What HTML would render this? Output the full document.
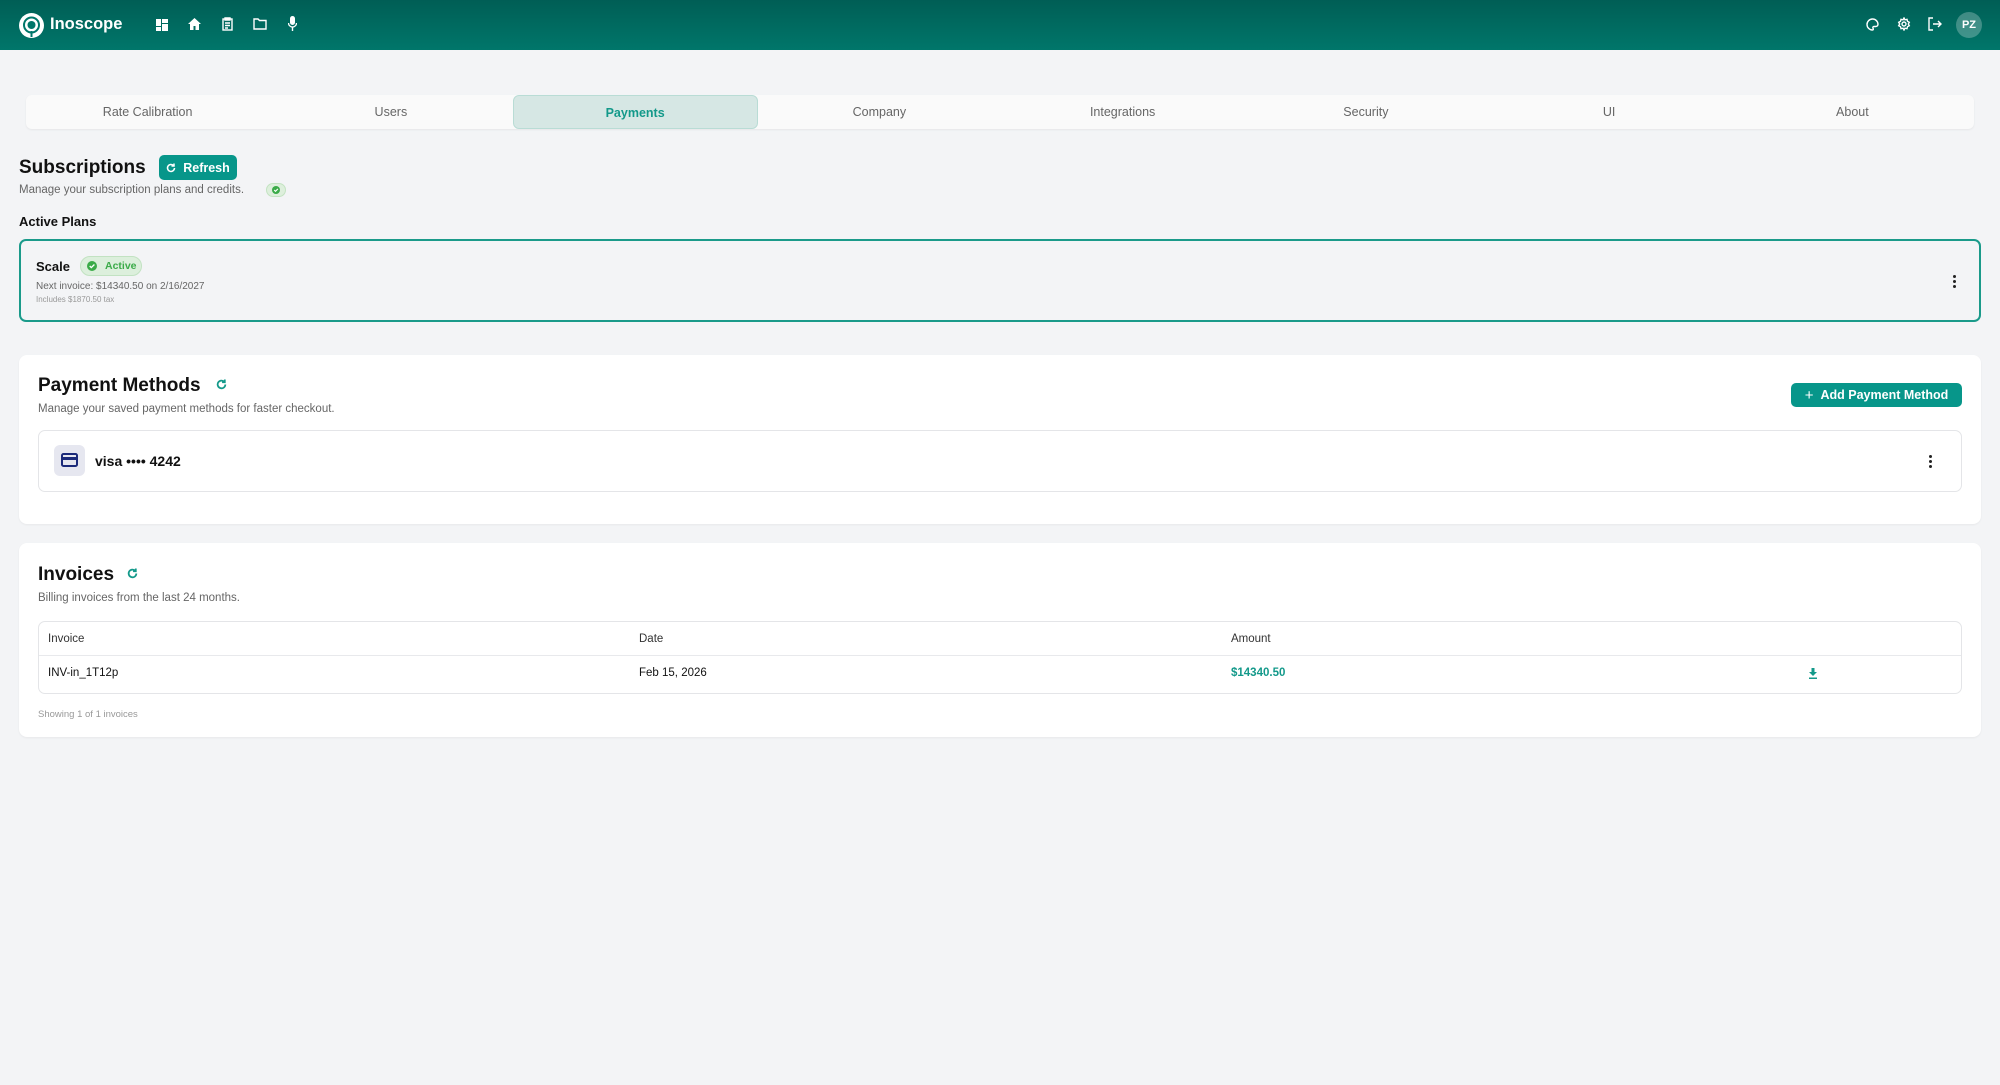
<!DOCTYPE html>
<html><head><meta charset="utf-8"><style>
*{box-sizing:border-box;margin:0;padding:0}
body{width:2000px;height:1085px;background:#f3f4f6;font-family:"Liberation Sans",sans-serif;position:relative;overflow:hidden;color:#111}
.a{position:absolute}
.hdr{left:0;top:0;width:2000px;height:50px;background:linear-gradient(#005e55,#00766a)}
.tabs{left:26px;top:95px;width:1948px;height:34px;background:#fafafa;border-radius:6px;box-shadow:0 1px 2px rgba(0,0,0,.06);display:flex}
.tab{flex:1;text-align:center;line-height:34px;font-size:12.5px;color:#666}
.tab.on{background:#d6e7e4;border:1px solid #b9dcd5;border-radius:6px;color:#13998a;font-weight:bold}
.card{background:#fff;border-radius:8px;left:19px;width:1962px;box-shadow:0 1px 2px rgba(0,0,0,.05)}
.btn{background:#07968a;color:#fff;border-radius:5px;font-weight:bold;font-size:12.5px;display:flex;align-items:center;justify-content:center;gap:7px}
.gray{color:#666}
.kb{width:3px;height:3px;border-radius:50%;background:#222;position:absolute}
</style></head><body>
<div class="a hdr">
  <svg class="a" style="left:19px;top:13px" width="25" height="25" viewBox="0 0 25 25"><circle cx="12.5" cy="12.5" r="12.5" fill="#fff"/><circle cx="12.5" cy="12" r="7.5" fill="none" stroke="#00766a" stroke-width="2"/><circle cx="12.5" cy="12" r="4" fill="#00766a"/><rect x="11.5" y="18" width="2" height="6" fill="#00766a"/></svg>
  <div class="a" style="left:50px;top:15px;color:#fff;font-weight:bold;font-size:16.5px">Inoscope</div>
  <svg class="a" style="left:156px;top:19px" width="12" height="12" viewBox="0 0 12 12" fill="#fff"><rect x="0" y="0" width="5" height="7"/><rect x="6" y="0" width="6" height="4"/><rect x="0" y="8" width="5" height="4"/><rect x="6" y="5" width="6" height="7"/></svg>
  <svg class="a" style="left:188px;top:18px" width="13" height="12" viewBox="0 0 13 12" fill="#fff"><path d="M6.5 0L0 6h2v6h3.5V8h2v4H11V6h2z"/></svg>
  <svg class="a" style="left:222px;top:17px" width="11" height="14" viewBox="0 0 11 14" fill="none" stroke="#fff" stroke-width="1.4"><rect x="1" y="2" width="9" height="11"/><path d="M3 1h5v2H3zM3 6h5M3 8.5h5M3 11h3"/></svg>
  <svg class="a" style="left:253px;top:18px" width="14" height="12" viewBox="0 0 14 12" fill="none" stroke="#fff" stroke-width="1.4"><path d="M1 1h4l1.5 1.5H13V11H1z"/></svg>
  <svg class="a" style="left:288px;top:16px" width="9" height="15" viewBox="0 0 9 15" fill="#fff"><rect x="2" y="0" width="5" height="9" rx="2.5"/><path d="M0.5 7a4 4 0 0 0 8 0" stroke="#fff" fill="none" stroke-width="1.3"/><rect x="3.8" y="11" width="1.4" height="4"/></svg>
  <svg class="a" style="left:1866px;top:18px" width="13" height="13" viewBox="0 0 13 13" fill="none" stroke="#fff" stroke-width="1.4"><path d="M6.5 1a5.5 5.5 0 1 0 0 11c1 0 1-1 .5-1.8-.5-.8 0-1.7 1-1.7H10A2.5 2.5 0 0 0 12 6 5.5 5.5 0 0 0 6.5 1z"/></svg>
  <svg class="a" style="left:1897px;top:17px" width="14" height="14" viewBox="0 0 14 14" fill="none" stroke="#fff" stroke-width="1.4"><circle cx="7" cy="7" r="2"/><path d="M7 1l1 1.8 2-.5.5 2 1.8 1-1 1.7 1 1.7-1.8 1-.5 2-2-.5L7 13l-1-1.8-2 .5-.5-2L1.7 8.7l1-1.7-1-1.7 1.8-1 .5-2 2 .5z"/></svg>
  <svg class="a" style="left:1928px;top:17px" width="14" height="14" viewBox="0 0 14 14" fill="none" stroke="#fff" stroke-width="1.4"><path d="M5 1H1v12h4M5 7h8M10 4l3 3-3 3"/></svg>
  <div class="a" style="left:1956px;top:12px;width:26px;height:26px;border-radius:50%;background:rgba(255,255,255,.25);color:#fff;font-size:11px;font-weight:bold;text-align:center;line-height:26px">PZ</div>
</div>
<div class="a tabs"><div class="tab">Rate Calibration</div><div class="tab">Users</div><div class="tab on">Payments</div><div class="tab">Company</div><div class="tab">Integrations</div><div class="tab">Security</div><div class="tab">UI</div><div class="tab">About</div></div>

<div class="a" style="left:19px;top:157px;font-size:19px;font-weight:bold">Subscriptions</div>
<div class="a btn" style="left:159px;top:155px;width:78px;height:25px"><svg width="10" height="10" viewBox="0 0 10 10" fill="none" stroke="#fff" stroke-width="1.5"><path d="M8.5 5A3.5 3.5 0 1 1 7.5 2.5M8 0.5v2.5H5.5"/></svg>Refresh</div>
<div class="a gray" style="left:19px;top:184px;font-size:11.5px">Manage your subscription plans and credits.</div>
<div class="a" style="left:266px;top:183px;width:20px;height:14px;border-radius:7px;background:#ddefdc;border:1px solid #c3e3c2"><svg style="display:block;margin:2px auto" width="8" height="8" viewBox="0 0 8 8"><circle cx="4" cy="4" r="4" fill="#3bab49"/><path d="M2.2 4l1.3 1.3L5.9 2.9" stroke="#fff" stroke-width="1.1" fill="none"/></svg></div>
<div class="a" style="left:19px;top:214px;font-size:13px;font-weight:bold">Active Plans</div>

<div class="a" style="left:19px;top:239px;width:1962px;height:83px;border:2px solid #1a9a8a;border-radius:7px;background:#f3f4f6"></div>
<div class="a" style="left:36px;top:259px;font-size:13px;font-weight:bold">Scale</div>
<div class="a" style="left:80px;top:256px;width:62px;height:20px;border-radius:10px;background:#dcefdc;border:1px solid #c2e2c2;color:#3bab49;font-size:10.5px;font-weight:bold;line-height:18px;padding-left:24px">Active<svg class="a" style="left:6px;top:4px" width="10" height="10" viewBox="0 0 10 10"><circle cx="5" cy="5" r="5" fill="#3bab49"/><path d="M2.7 5l1.6 1.6L7.4 3.5" stroke="#fff" stroke-width="1.3" fill="none"/></svg></div>
<div class="a gray" style="left:36px;top:281px;font-size:10px">Next invoice: $14340.50 on 2/16/2027</div>
<div class="a" style="left:36px;top:295px;font-size:8px;color:#999">Includes $1870.50 tax</div>
<div class="kb" style="left:1953px;top:275px"></div><div class="kb" style="left:1953px;top:280px"></div><div class="kb" style="left:1953px;top:285px"></div>

<div class="a card" style="top:355px;height:169px"></div>
<div class="a" style="left:38px;top:375px;font-size:19px;font-weight:bold">Payment Methods</div>
<svg class="a" style="left:216px;top:379px" width="11" height="11" viewBox="0 0 10 10" fill="none" stroke="#13998a" stroke-width="1.6"><path d="M8.5 5A3.5 3.5 0 1 1 7.5 2.5M8 0.5v2.5H5.5"/></svg>
<div class="a gray" style="left:38px;top:403px;font-size:11.5px">Manage your saved payment methods for faster checkout.</div>
<div class="a btn" style="left:1791px;top:383px;width:171px;height:24px"><span style="font-size:15px;font-weight:normal">+</span>Add Payment Method</div>
<div class="a" style="left:38px;top:430px;width:1924px;height:62px;border:1px solid #e4e5e8;border-radius:7px"></div>
<div class="a" style="left:54px;top:445px;width:31px;height:31px;border-radius:6px;background:#e6e7f0"></div>
<svg class="a" style="left:61px;top:453px" width="17" height="14" viewBox="0 0 17 14"><rect x="1" y="1" width="15" height="12" rx="1.5" fill="none" stroke="#1b2a7a" stroke-width="2"/><rect x="1" y="4" width="15" height="3" fill="#1b2a7a"/></svg>
<div class="a" style="left:95px;top:453px;font-size:14px;font-weight:bold">visa •••• 4242</div>
<div class="kb" style="left:1929px;top:455px"></div><div class="kb" style="left:1929px;top:460px"></div><div class="kb" style="left:1929px;top:465px"></div>

<div class="a card" style="top:543px;height:194px"></div>
<div class="a" style="left:38px;top:564px;font-size:19px;font-weight:bold">Invoices</div>
<svg class="a" style="left:127px;top:568px" width="11" height="11" viewBox="0 0 10 10" fill="none" stroke="#13998a" stroke-width="1.6"><path d="M8.5 5A3.5 3.5 0 1 1 7.5 2.5M8 0.5v2.5H5.5"/></svg>
<div class="a gray" style="left:38px;top:592px;font-size:11.5px">Billing invoices from the last 24 months.</div>
<div class="a" style="left:38px;top:621px;width:1924px;height:73px;border:1px solid #e4e5e8;border-radius:7px"></div>
<div class="a" style="left:39px;top:655px;width:1922px;height:1px;background:#e8e9ec"></div>
<div class="a" style="left:48px;top:633px;font-size:11.5px;color:#333">Invoice</div>
<div class="a" style="left:639px;top:633px;font-size:11.5px;color:#333">Date</div>
<div class="a" style="left:1231px;top:633px;font-size:11.5px;color:#333">Amount</div>
<div class="a" style="left:48px;top:667px;font-size:11.5px">INV-in_1T12p</div>
<div class="a" style="left:639px;top:667px;font-size:11.5px">Feb 15, 2026</div>
<div class="a" style="left:1231px;top:667px;font-size:11.5px;color:#13998a;font-weight:bold">$14340.50</div>
<svg class="a" style="left:1808px;top:668px" width="10" height="11" viewBox="0 0 10 11" fill="#13998a"><path d="M3.5 0h3v4H9L5 8 1 4h2.5z"/><rect x="1" y="9.5" width="8" height="1.5"/></svg>
<div class="a" style="left:38px;top:709px;font-size:9.5px;color:#999">Showing 1 of 1 invoices</div>
</body></html>
